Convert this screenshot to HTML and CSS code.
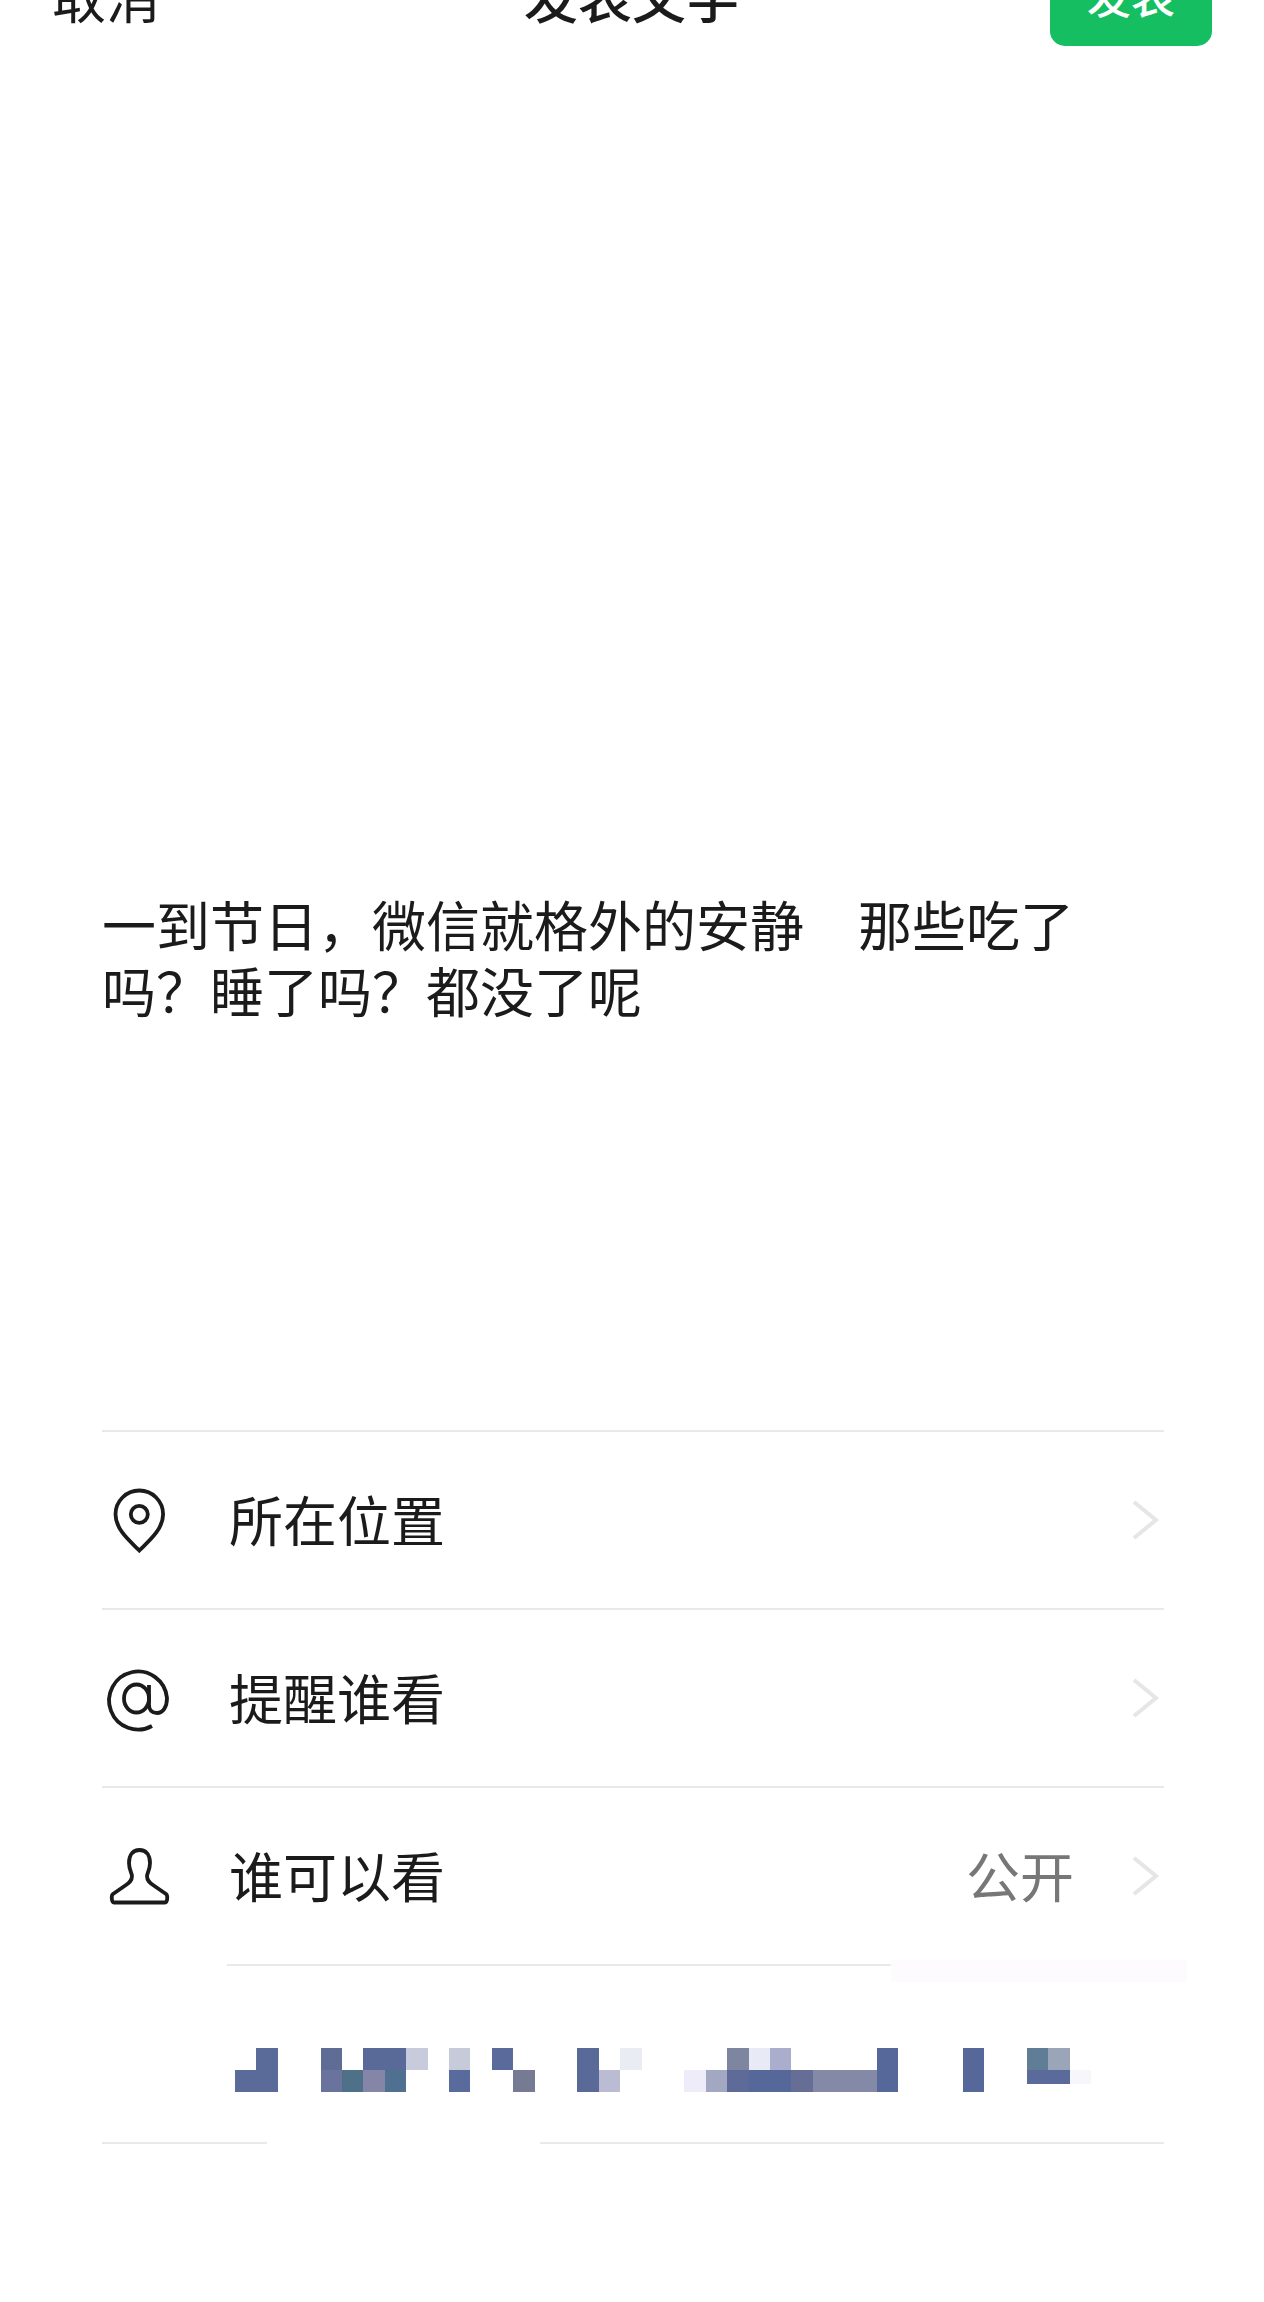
FILE: index.html
```html
<!DOCTYPE html>
<html lang="zh-CN">
<head>
  <meta charset="UTF-8" />
  <title>发表文字</title>
  <link rel="stylesheet" href="styles.css">
</head>
<body>

  <header class="topbar">
    <span class="cancel">取消</span>
    <span class="title">发表文字</span>
    <button class="publish">发表</button>
  </header>

  <main class="content">
    <p class="post-text">一到节日，微信就格外的安静　那些吃了吗？睡了吗？都没了呢</p>

    <section class="list">
      <div class="row">
        <svg class="icon" viewBox="0 0 74 74">
          <path d="M37.3 67.5C29 59 13.5 47 13.5 31.3A23.8 23.8 0 0 1 61.1 31.3C61.1 47 45.6 59 37.3 67.5Z" />
          <circle cx="37.3" cy="31.3" r="8.5" />
        </svg>
        <span class="label">所在位置</span>
        <svg class="chevron" viewBox="0 0 30 40"><path d="M3 2L25 20L3 38" /></svg>
      </div>

      <div class="row">
        <svg class="icon" viewBox="0 0 74 74">
          <path d="M50 65A29 29 0 1 1 65 37C65 46 61 52 55 52C50 52 47 49 47 44V24" />
          <ellipse cx="34.5" cy="37.5" rx="12.5" ry="14" />
        </svg>
        <span class="label">提醒谁看</span>
        <svg class="chevron" viewBox="0 0 30 40"><path d="M3 2L25 20L3 38" /></svg>
      </div>

      <div class="row">
        <svg class="icon" viewBox="0 0 74 74">
          <path d="M37.5 11C31 11 27 16 27 24C27 31 30 34 30 37C30 42 27 44 24 46L11 55C9 56.5 9.5 63.5 12 63.5H63C65.5 63.5 66 56.5 64 55L51 46C48 44 45 42 45 37C45 34 48 31 48 24C48 16 44 11 37.5 11Z" />
        </svg>
        <span class="label">谁可以看</span>
        <span class="value">公开</span>
        <svg class="chevron" viewBox="0 0 30 40"><path d="M3 2L25 20L3 38" /></svg>
      </div>

      <div class="row row-blurred">
        <!-- mosaic over the hidden names, one unit = one block -->
        <svg class="mosaic" viewBox="0 0 40 2" preserveAspectRatio="none" shape-rendering="crispEdges">
          <rect x="1" y="0" width="1" height="1" fill="#5a6a99" />
          <rect x="4" y="0" width="1" height="1" fill="#5f6d95" />
          <rect x="6" y="0" width="2" height="1" fill="#5a6a98" />
          <rect x="8" y="0" width="1" height="1" fill="#c8cbdc" />
          <rect x="10" y="0" width="1" height="1" fill="#c7cad9" />
          <rect x="12" y="0" width="1" height="1" fill="#5a6a9a" />
          <rect x="16" y="0" width="1" height="2" fill="#5a6a98" />
          <rect x="18" y="0" width="1" height="1" fill="#e9ecf2" />
          <rect x="23" y="0" width="1" height="1" fill="#7e869f" />
          <rect x="24" y="0" width="1" height="1" fill="#e8ebf6" />
          <rect x="25" y="0" width="1" height="1" fill="#aaadcb" />
          <rect x="30" y="0" width="1" height="2" fill="#56689a" />
          <rect x="34" y="0" width="1" height="2" fill="#56689a" />
          <rect x="37" y="0" width="1" height="1" fill="#5f7e96" />
          <rect x="38" y="0" width="1" height="1" fill="#9aa5b8" />
          <rect x="0" y="1" width="2" height="1" fill="#5a6a99" />
          <rect x="4" y="1" width="1" height="1" fill="#6a739c" />
          <rect x="5" y="1" width="1" height="1" fill="#4f7089" />
          <rect x="6" y="1" width="1" height="1" fill="#8585a8" />
          <rect x="7" y="1" width="1" height="1" fill="#4f7090" />
          <rect x="10" y="1" width="1" height="1" fill="#596a9c" />
          <rect x="13" y="1" width="1" height="1" fill="#767a93" />
          <rect x="17" y="1" width="1" height="1" fill="#bbbcd4" />
          <rect x="21" y="1" width="1" height="1" fill="#eeecf8" />
          <rect x="22" y="1" width="1" height="1" fill="#a2a7c2" />
          <rect x="23" y="1" width="1" height="1" fill="#5e6a98" />
          <rect x="24" y="1" width="2" height="1" fill="#56689a" />
          <rect x="26" y="1" width="1" height="1" fill="#666e95" />
          <rect x="27" y="1" width="3" height="1" fill="#8389a6" />
          <rect x="37" y="1" width="2" height="0.65" fill="#5a6a9a" />
          <rect x="39" y="1" width="1" height="0.65" fill="#f6f6fb" />
        </svg>
      </div>

      <div class="list-end"></div>
    </section>
  </main>

</body>
</html>
```

FILE: styles.css
```css
:root {
  --text: #1b1b1b;
  --line: #e9e9e9;
  --green: #15be60;
}
html, body {
  margin: 0;
  height: 2302px;
  overflow: hidden;
  background-color: #fff;
}
body {
  font-family: "Noto Sans CJK SC", "Noto Sans", sans-serif;
  font-size: 54px;
  color: var(--text);
}
.topbar {
  display: grid;
  grid-template-columns: 1fr auto 1fr;
  align-items: center;
  margin-top: -56px;
  padding: 0 52px;
}
.title {
  font-weight: 500;
}
.publish {
  justify-self: end;
  width: 162px;
  height: 102px;
  padding: 0;
  border: none;
  border-radius: 15px;
  background-color: var(--green);
  color: white;
  font-family: inherit;
  font-size: 44px;
  font-weight: 500;
}
.content {
  padding: 0 100px 0 102px;
}
.post-text {
  max-width: 1000px;
  margin: 845px 0 0;
  line-height: 66px;
}
.list {
  margin-top: 407px;
}
.row {
  position: relative;
  display: flex;
  align-items: center;
  height: 176px;
  padding-right: 3px;
  border-top: 2px solid var(--line);
}
.icon {
  flex: none;
  width: 74px;
  height: 74px;
  margin-right: 53px;
  fill: none;
  stroke: var(--text);
  stroke-width: 3.8;
}
.label {
  flex: 1;
  padding-bottom: 3px;
}
.value {
  margin-right: 57px;
  padding-bottom: 3px;
  color: #777;
}
.chevron {
  flex: none;
  width: 30px;
  height: 40px;
  fill: none;
  stroke: #e6e6e6;
  stroke-width: 4;
}
.row-blurred {
  align-items: flex-start;
  padding-left: 133px;
  border-top: none;
  height: 178px;
  background: linear-gradient(to right, transparent 125px, var(--line) 125px, var(--line) 789px, transparent 789px) no-repeat top / 100% 2px;
}
.row-blurred::after {
  content: "";
  position: absolute;
  top: -4px;
  left: 789px;
  width: 296px;
  height: 22px;
  background-color: #fdfbfd;
}
.mosaic {
  display: block;
  width: 856px;
  height: 44px;
  margin-top: 84px;
}
.list-end {
  height: 2px;
  background: linear-gradient(to right, var(--line) 165px, transparent 165px, transparent 438px, var(--line) 438px);
}
```
